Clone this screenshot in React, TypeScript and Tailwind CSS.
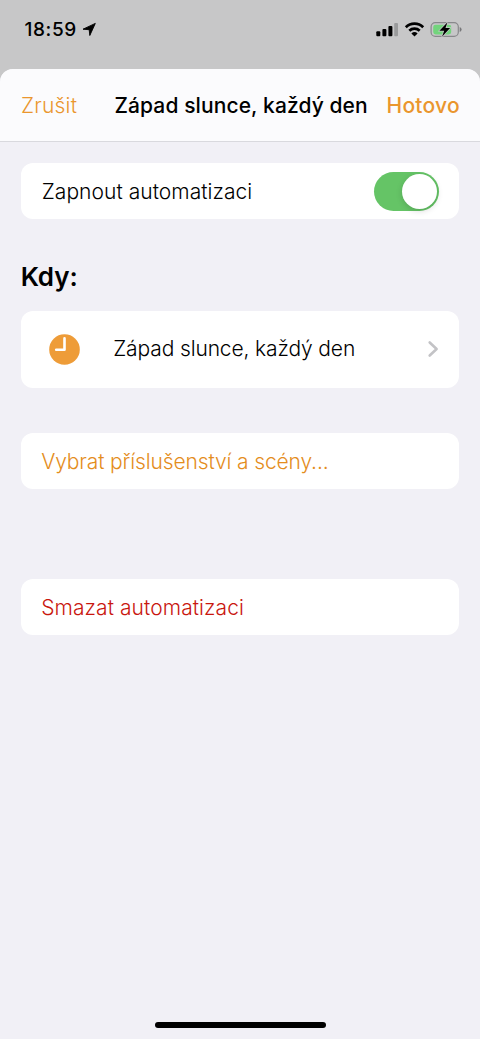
import type { ReactNode } from "react";

function Card({ children, className }: { children: ReactNode; className: string }) {
  return <div className={`flex items-center rounded-[12px] bg-white ${className}`}>{children}</div>;
}

function StatusBar() {
  return (
    <div className="flex h-[69px] shrink-0 pt-[18px] pl-[24.5px]">
      <span className="w-[54px] text-[19px] leading-6 font-medium tracking-[0.6px] whitespace-nowrap">18:59</span>
      <svg className="mt-[4px] ml-[3px]" width="15" height="15" viewBox="0 0 15 15">
        <path d="M1 7.2 13.3 1.4 7.8 13.5 7.2 7.7Z" fill="black" stroke="black" strokeWidth=".9" strokeLinejoin="round" />
      </svg>
      <svg className="ml-auto" width="104" height="24" viewBox="376 18 104 24">
        <rect x="376.3" y="31.2" width="4" height="5" rx="1" />
        <rect x="382.4" y="29" width="4" height="7.2" rx="1" />
        <rect x="388.4" y="26" width="4" height="10.2" rx="1" />
        <rect x="394.2" y="23" width="3.8" height="13.2" rx="1" fill="#999a9b" />
        <g fill="none" stroke="black" strokeWidth="2.7">
          <path d="M405.8 27.2a12.4 12.4 0 0 1 17.4 0" />
          <path d="M409.3 30.7a7.5 7.5 0 0 1 10.4 0" />
        </g>
        <path d="M414.5 36.5 411.4 33.4a4.7 4.7 0 0 1 6.2 0Z" />
        <rect x="431.1" y="22.6" width="27.2" height="13.8" rx="4.2" fill="none" stroke="#88888b" strokeWidth="1.2" />
        <rect x="433.2" y="24.7" width="18" height="9.7" rx="2.4" fill="#72d47c" />
        <path d="M459.7 27q1.9.7 1.9 2.5t-1.9 2.5Z" fill="#77777a" />
        <path d="M447.5 22.2 439.4 30.7h4.8l-2.2 6.1 8.1-8.9h-4.6Z" stroke="#c7c7c8" strokeWidth="1.4" paintOrder="stroke" />
      </svg>
    </div>
  );
}

export default function App() {
  return (
    <div className="flex h-[1039px] w-[480px] flex-col overflow-hidden bg-[#c7c7c8] font-['Inter',sans-serif] text-black">
      <StatusBar />
      <main className="flex flex-1 flex-col overflow-hidden rounded-t-[13px] bg-[#f1f0f6]">
        <header className="flex h-[73px] shrink-0 items-center border-b-[1.5px] border-[#d9d9de] bg-[#fbfbfd] pt-px pl-[21px] text-[21px] whitespace-nowrap">
          <button className="w-[93.5px] text-left font-light tracking-[0.2px] text-[#ea962e]">Zrušit</button>
          <h1 className="w-[272px] font-medium tracking-[0.1px]">Západ slunce, každý den</h1>
          <button className="text-left font-medium tracking-[0.25px] text-[#ea962e]">Hotovo</button>
        </header>

        <div className="flex flex-1 flex-col px-[20.7px] pt-[21.4px] text-[21px] font-light whitespace-nowrap">
          <Card className="h-[56px] justify-between pr-[20px] pl-[21px]">
            <span className="pt-px tracking-[0.05px]">Zapnout automatizaci</span>
            <button
              role="switch"
              aria-checked="true"
              aria-label="Zapnout automatizaci"
              className="flex h-[39.5px] w-[65px] items-center justify-end rounded-full bg-[#65c466] pr-[2px]"
            >
              <span className="size-[35.5px] rounded-full bg-white shadow-[0_2px_6px_rgba(0,0,0,0.15)]" />
            </button>
          </Card>

          <h2 className="mt-[39.5px] h-[36px] text-[26px] leading-[36px] font-semibold tracking-[-0.1px]">Kdy:</h2>

          <Card className="mt-[16px] h-[77px] pr-[20px] pl-[28.5px]">
            <svg width="31" height="31" viewBox="0 0 31 31">
              <circle cx="15.5" cy="15.5" r="15.3" fill="#ee9c38" />
              <path d="M15.5 4.4v11.4H7.2" fill="none" stroke="white" strokeWidth="2.6" strokeLinecap="round" strokeLinejoin="round" />
            </svg>
            <span className="ml-[33px] pb-px tracking-[-0.13px]">Západ slunce, každý den</span>
            <svg className="ml-auto" width="12" height="18" viewBox="0 0 12 18">
              <path d="M2.7 2.5 9.6 9 2.7 15.5" fill="none" stroke="#c3c3c6" strokeWidth="2.6" strokeLinecap="round" strokeLinejoin="round" />
            </svg>
          </Card>

          <Card className="mt-[45px] h-[56px] pt-px pl-[20.5px] tracking-[-0.13px] text-[#e48d1c]">Vybrat příslušenství a scény...</Card>
          <Card className="mt-[90px] h-[56px] pt-px pl-[20.5px] tracking-[0.08px] text-[#c9170f]">Smazat automatizaci</Card>
        </div>
        <div className="mb-[11px] h-[6px] w-[171px] self-center rounded-full bg-black" />
      </main>
    </div>
  );
}
